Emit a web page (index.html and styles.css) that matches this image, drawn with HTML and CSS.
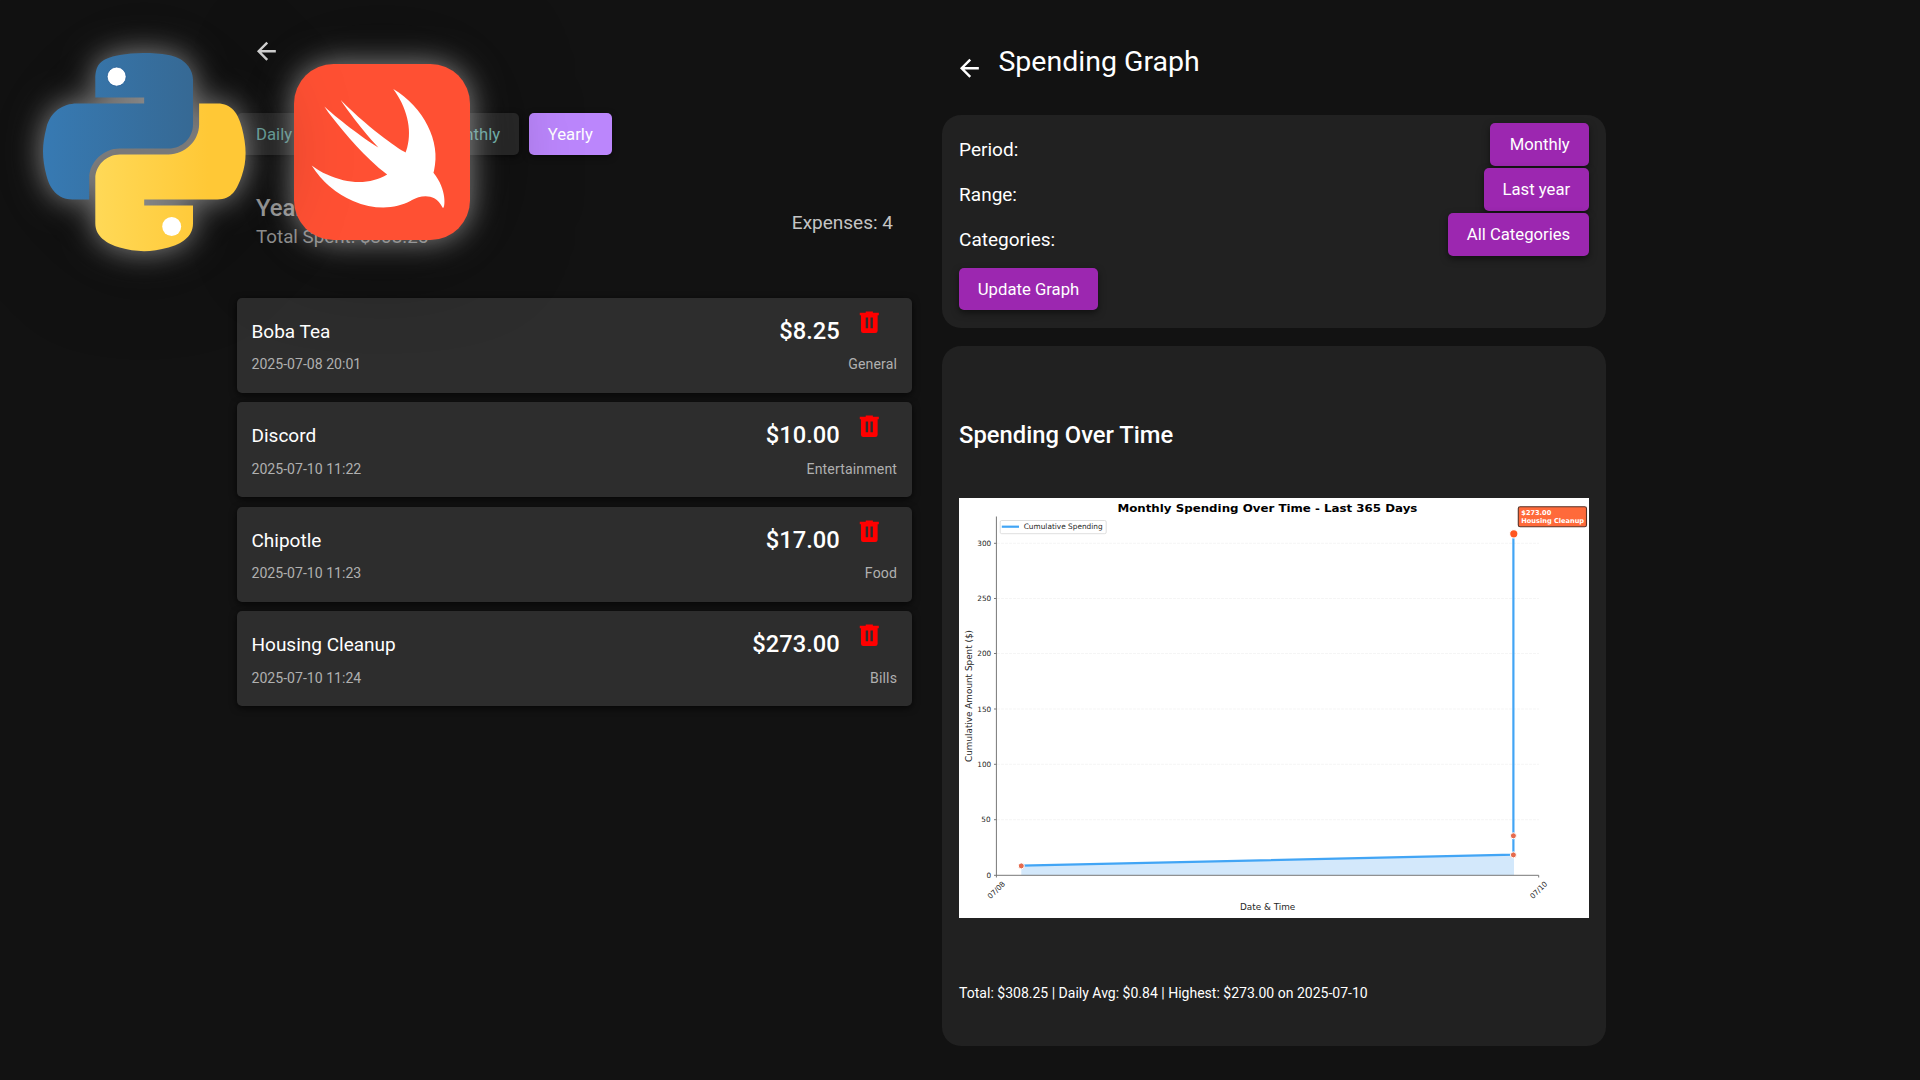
FILE: index.html
```html
<!DOCTYPE html>
<html lang="en">
<head>
<meta charset="utf-8">
<title>Expense Tracker</title>
<link rel="stylesheet" href="styles.css">
</head>
<body>
<svg class="defs" aria-hidden="true">
  <symbol id="arrow" viewBox="0 0 24 24"><path d="M20,11V13H8L13.5,18.5L12.08,19.92L4.16,12L12.08,4.08L13.5,5.5L8,11H20Z"/></symbol>
  <symbol id="trash" viewBox="0 0 24 24"><path d="M9,3V4H4V6H5V19A2,2 0 0,0 7,21H17A2,2 0 0,0 19,19V6H20V4H15V3H9M9,8H11V17H9V8M13,8H15V17H13V8Z"/></symbol>
</svg>
<main class="screens">
  <section class="history">
    <header class="history-bar"><svg class="icon"><use href="#arrow"/></svg></header>
    <nav class="tabs">
      <button class="tab">Daily</button>
      <button class="tab">Weekly</button>
      <button class="tab">Monthly</button>
      <button class="tab active">Yearly</button>
    </nav>
    <div class="summary">
      <div class="summary-main">
        <h2 class="summary-title">Yearly</h2>
        <p class="summary-total">Total Spent: $308.25</p>
      </div>
      <p class="summary-count">Expenses: 4</p>
    </div>
    <ul class="expenses">
      <li class="expense">
        <div class="line"><span class="name">Boba Tea</span><span class="price">$8.25</span><svg class="icon bin"><use href="#trash"/></svg></div>
        <div class="line meta"><span>2025-07-08 20:01</span><span class="category">General</span></div>
      </li>
      <li class="expense">
        <div class="line"><span class="name">Discord</span><span class="price">$10.00</span><svg class="icon bin"><use href="#trash"/></svg></div>
        <div class="line meta"><span>2025-07-10 11:22</span><span class="category">Entertainment</span></div>
      </li>
      <li class="expense">
        <div class="line"><span class="name">Chipotle</span><span class="price">$17.00</span><svg class="icon bin"><use href="#trash"/></svg></div>
        <div class="line meta"><span>2025-07-10 11:23</span><span class="category">Food</span></div>
      </li>
      <li class="expense">
        <div class="line"><span class="name">Housing Cleanup</span><span class="price">$273.00</span><svg class="icon bin"><use href="#trash"/></svg></div>
        <div class="line meta"><span>2025-07-10 11:24</span><span class="category">Bills</span></div>
      </li>
    </ul>
  </section>

  <section class="graph">
    <header class="graph-bar"><svg class="icon"><use href="#arrow"/></svg><h1>Spending Graph</h1></header>
    <div class="card filters">
      <div class="filter"><span>Period:</span><button class="btn">Monthly</button></div>
      <div class="filter"><span>Range:</span><button class="btn">Last year</button></div>
      <div class="filter"><span>Categories:</span><button class="btn">All Categories</button></div>
      <button class="btn update">Update Graph</button>
    </div>
    <div class="card report">
      <h2>Spending Over Time</h2>
      <svg class="chart" viewBox="0 0 630 420">
        <rect width="630" height="420" fill="#fff"/>
        <g class="grid">
          <path d="M38 45.3H580M38 100.5H580M38 155.5H580M38 211H580M38 266.3H580M38 321.7H580"/>
        </g>
        <path class="area" d="M62.3 367.9L555 356.7V377.3H62.3Z"/>
        <path class="axis" d="M37.4 18.5V379.5M35 377.3H579.7V379.5M35 45.3H37.4M35 100.5H37.4M35 155.5H37.4M35 211H37.4M35 266.3H37.4M35 321.7H37.4"/>
        <path class="series" d="M62.3 367.7L554.4 356.7V35.7"/>
        <g class="dots"><circle cx="62.3" cy="367.9" r="3"/><circle cx="554.4" cy="356.9" r="3"/><circle cx="554.4" cy="337.8" r="3"/></g>
        <circle class="peak" cx="554.8" cy="35.8" r="4.2"/>
        <g class="ticks">
          <text x="32.2" y="48">300</text><text x="32.2" y="103.2">250</text><text x="32.2" y="158.2">200</text><text x="32.2" y="213.7">150</text><text x="32.2" y="269">100</text><text x="31.6" y="324.4">50</text><text x="32.2" y="379.9">0</text>
        </g>
        <g class="ticks mid">
          <text transform="translate(37.2 392) rotate(-45)" y="2.6">07/08</text>
          <text transform="translate(579.6 392) rotate(-45)" y="2.6">07/10</text>
        </g>
        <text class="axis-title" x="281" y="412" textLength="55.3" lengthAdjust="spacingAndGlyphs">Date &amp; Time</text>
        <text class="axis-title" transform="translate(12.8 264) rotate(-90)" textLength="132" lengthAdjust="spacingAndGlyphs">Cumulative Amount Spent ($)</text>
        <text class="chart-title" x="158.4" y="14.2" textLength="300" lengthAdjust="spacingAndGlyphs">Monthly Spending Over Time - Last 365 Days</text>
        <rect class="legend" x="41.2" y="22.5" width="106" height="13.2" rx="1.5"/>
        <path class="series" d="M42.8 28.7H60"/>
        <text class="legend-text" x="64.7" y="31.3" textLength="79" lengthAdjust="spacingAndGlyphs">Cumulative Spending</text>
        <rect class="note" x="559.3" y="8.8" width="68.2" height="20" rx="1.8"/>
        <g class="note-text"><text x="562.3" y="16.8" textLength="30" lengthAdjust="spacingAndGlyphs">$273.00</text><text x="562.3" y="24.8" textLength="62.8" lengthAdjust="spacingAndGlyphs">Housing Cleanup</text></g>
      </svg>
      <p class="stats">Total: $308.25 | Daily Avg: $0.84 | Highest: $273.00 on 2025-07-10</p>
    </div>
  </section>
</main>

<svg class="logo swift" viewBox="0 0 24 24">
  <rect width="24" height="24" rx="5.4" fill="#ff5033"/>
  <path fill="#fff" d="M13.543 3.41c4.114 2.47 6.545 7.162 5.549 11.131-.024.093-.05.181-.076.272l.002.001c2.062 2.538 1.5 5.258 1.236 4.745-1.072-2.086-3.066-1.568-4.088-1.043a6.803 6.803 0 0 1-.281.158l-.02.012-.002.002c-2.115 1.123-4.957 1.205-7.812-.022a12.568 12.568 0 0 1-5.64-4.838c.649.48 1.35.902 2.097 1.252 3.019 1.414 6.051 1.311 8.197-.002C9.651 12.73 7.101 9.67 5.146 7.191a10.628 10.628 0 0 1-1.005-1.384c2.34 2.142 6.038 4.83 7.365 5.576C8.69 8.408 6.208 4.743 6.324 4.86c4.436 4.466 8.527 6.996 8.527 6.996.154.085.27.154.36.213.085-.215.16-.437.224-.668.708-2.588-.09-5.548-1.893-7.992z"/>
</svg>
<svg class="logo python" viewBox="0 0 111.2 112.4" preserveAspectRatio="none">
  <linearGradient id="blue"><stop offset="0" stop-color="#377ab3"/><stop offset="1" stop-color="#366994"/></linearGradient>
  <linearGradient id="gold"><stop offset="0" stop-color="#ffd957"/><stop offset=".75" stop-color="#ffc836"/></linearGradient>
  <path fill="url(#blue)" d="M54.919 0C50.335.022 45.958.413 42.106 1.095 30.76 3.099 28.7 7.295 28.7 15.032V25.251H55.513V28.657H18.638C10.845 28.657 4.022 33.341 1.888 42.251-.574 52.464-.683 58.837 1.888 69.501 3.793 77.439 8.345 83.095 16.138 83.095H25.356V70.845C25.356 61.995 33.013 54.188 42.106 54.188H68.888C76.342 54.188 82.294 48.05 82.294 40.563V15.032C82.294 7.766 76.164 2.307 68.888 1.095 64.283.328 59.502-.02 54.919 0z"/>
  <path fill="url(#gold)" d="M85.638 28.657V40.563C85.638 49.794 77.812 57.563 68.888 57.563H42.106C34.77 57.563 28.7 63.842 28.7 71.188V96.72C28.7 103.986 35.019 108.26 42.106 110.345 50.594 112.84 58.732 113.291 68.888 110.345 75.638 108.39 82.294 104.457 82.294 96.72V86.501H55.513V83.095H95.7C103.492 83.095 106.396 77.659 109.106 69.501 111.906 61.102 111.787 53.025 109.106 42.251 107.18 34.493 103.502 28.657 95.7 28.657z"/>
  <ellipse cx="40.4" cy="13.4" rx="5.2" ry="5.4" fill="#fff" stroke="#1f5a94" stroke-width=".4"/>
  <ellipse cx="70.6" cy="98.4" rx="5.2" ry="5.4" fill="#fff"/>
</svg>
</body>
</html>
```
FILE: styles.css
```css
* { box-sizing: border-box; margin: 0; padding: 0; }
body {
  position: relative;
  width: 1920px;
  height: 1080px;
  overflow: hidden;
  background: #121212;
  color: #fff;
  font-family: Roboto, sans-serif;
  font-size: 19px;
}
.defs { display: none; }
.icon { width: 28.6px; height: 28.6px; fill: #fff; flex: none; }
button { font: 400 16.7px/1 Roboto, sans-serif; color: #fff; border: 0; border-radius: 5px; }

.screens { display: flex; gap: 30px; padding-left: 237px; }

.history { width: 674.6px; }
.history-bar { height: 112.7px; padding: 37px 0 0 14.7px; }
.history-bar .icon { fill: #e2e2e2; }
.tabs { display: flex; gap: 9.5px; height: 42.6px; }
.tab { padding: 2px 19.1px 0; background: #2a2a2a; color: #80cbc4; box-shadow: 0 2px 6px rgba(0,0,0,.5); }
.tab.active { background: #bb86fc; color: #fff; }
.summary { display: flex; justify-content: space-between; align-items: center; height: 142.7px; padding: 0 18.6px 8px 19px; color: #c4c4c4; }
.summary-main { margin-top: -2px; color: #a0a0a0; }
.summary-title { font-size: 23.8px; font-weight: 500; line-height: 31px; color: #b4b4b4; }
.summary-total { font-size: 18.8px; line-height: 27px; }
.expenses { display: flex; flex-direction: column; gap: 9.6px; list-style: none; }
.expense { height: 94.85px; padding: 10px 14.5px; border-radius: 5px; background: #2d2d2d; box-shadow: 0 2px 7px rgba(0,0,0,.7); }
.line { display: flex; align-items: center; height: 46px; }
.name { flex: 1; padding-top: 1px; }
.price { font-size: 23.7px; font-weight: 500; }
.bin { margin: -17.5px 13.8px 0 15px; fill: #f00; }
.meta { justify-content: space-between; height: 20.5px; font-size: 14.1px; color: #b0b0b0; }
.category { letter-spacing: .14px; }

.graph { width: 664.8px; }
.graph-bar { display: flex; height: 114.6px; padding: 54.4px 0 0 13.8px; gap: 14.4px; }
.graph-bar h1 { margin-top: -10.6px; font-size: 28.5px; line-height: 36px; font-weight: 400; }
.card { padding: 0 17.5px; border-radius: 19px; background: #212121; }
.filters { height: 213.6px; padding-top: 8.4px; }
.filter { display: flex; justify-content: space-between; height: 45.1px; }
.filter span { line-height: 53px; }
.btn { display: block; min-width: 98.5px; height: 42.7px; padding: 2px 18.7px 0; background: #9c27b0; box-shadow: 0 3px 7px rgba(0,0,0,.5); }
.update { margin-top: 9.4px; }
.report { height: 700.2px; margin-top: 17.8px; padding-top: 74.4px; }
.report h2 { font-size: 23.75px; font-weight: 500; line-height: 30px; }
.chart { display: block; width: 630px; height: 420px; margin-top: 47.6px; }
.stats { margin-top: 65.4px; font-size: 14.03px; line-height: 20px; }

.chart text { font-family: "DejaVu Sans", sans-serif; fill: #262626; }
.chart .grid { fill: none; stroke: #f5f5f5; stroke-width: 1; stroke-dasharray: 3 1; }
.chart .area { fill: #d3e8fb; }
.chart .axis { fill: none; stroke: #777; stroke-width: 1; }
.chart .series { fill: none; stroke: #42a5f5; stroke-width: 2.2; }
.chart .dots { fill: #e56a4d; stroke: #fff; stroke-width: 1; }
.chart .peak { fill: #ff5722; stroke: #fff; stroke-width: 1.2; }
.chart .ticks { font-size: 7.3px; text-anchor: end; }
.chart .mid { text-anchor: middle; }
.chart .axis-title { font-size: 9.2px; }
.chart text.chart-title { font-size: 11.2px; font-weight: 700; fill: #000; }
.chart .legend { fill: #fff; stroke: #d6d6d6; stroke-width: .8; }
.chart .legend-text { font-size: 7.5px; }
.chart .note { fill: #ff6a3a; stroke: #5a3226; stroke-width: 1.1; }
.chart .note-text text { fill: #fff; font-size: 6.7px; font-weight: 700; }

.logo { position: absolute; overflow: visible; filter: drop-shadow(0 0 16px rgba(255,255,255,.54)) drop-shadow(0 0 45px rgba(0,0,0,.6)); }
.swift { left: 294px; top: 64px; width: 176px; height: 176px; }
.python { left: 43px; top: 53px; width: 202.7px; height: 198.2px; }
```
